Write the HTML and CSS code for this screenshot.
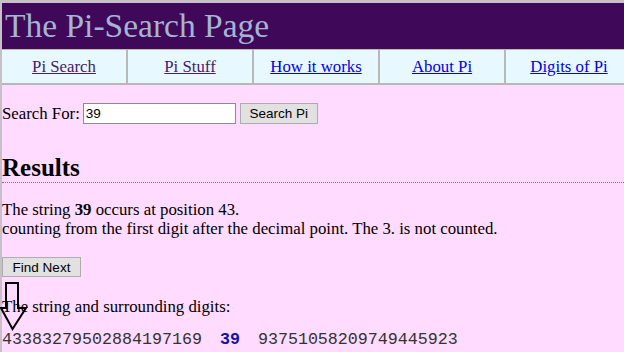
FILE: index.html
```html
<!DOCTYPE html>
<html lang="en">
<head>
  <meta charset="UTF-8" />
  <title>The Pi-Search Page</title>
  <link rel="stylesheet" href="styles.css">
</head>
<body>
  <div class="page">
    <h1 class="title">The Pi-Search Page</h1>
    <nav class="menu">
      <a href="#" class="visited">Pi Search</a>
      <a href="#" class="visited">Pi Stuff</a>
      <a href="#">How it works</a>
      <a href="#">About Pi</a>
      <a href="#">Digits of Pi</a>
    </nav>

    <form class="search" onsubmit="return false">
      <label for="q">Search For:</label>
      <input type="text" id="q" value="39" />
      <button type="submit">Search Pi</button>
    </form>

    <h2 class="results">Results</h2>
    <p class="found">The string <b>39</b> occurs at position 43.<br>
    counting from the first digit after the decimal point. The 3. is not counted.</p>

    <button class="next">Find Next</button>

    <div class="context">
      <svg class="arrow" width="28" height="50" viewBox="0 0 28 50">
        <path d="M6 1 H18 V26 H26 L12.5 47 L1 26 H6 Z" fill="none" stroke="#000" stroke-width="2"/>
      </svg>
      <p>The string and surrounding digits:</p>
      <div class="digits">43383279502884197169 <b>39</b> 93751058209749445923</div>
    </div>
  </div>
</body>
</html>
```

FILE: styles.css
```css
body {
  margin: 0;
  background: #ffdcff;
  font-family: "Liberation Serif", "Times New Roman", serif;
  font-size: 16.8px;
  color: #000;
  overflow: hidden;
}
.page {
  border-top: 3px solid #c8c0c8;
  border-left: 2px solid #c8c0c8;
  min-height: 349px;
}
.title {
  margin: 0;
  background: #400858;
  color: #a4b4d4;
  font-weight: normal;
  font-size: 33.5px;
  line-height: 46px;
  padding-left: 3px;
}
.menu {
  display: grid;
  grid-template-columns: repeat(5, 126px);
  background: #e8f8ff;
  border-top: 1px solid #b8b8b8;
  border-bottom: 2px solid #b8b8b8;
}
.menu a {
  text-align: center;
  line-height: 33px;
  color: #0000ee;
  border-right: 2px solid #b8b8b8;
}
.menu a:last-child {
  border-right: none;
}
.menu a.visited {
  color: #46206a;
}
.search {
  margin: 18px 0 0 0;
  display: flex;
  align-items: center;
}
.search label {
  margin-right: 3px;
}
.search input {
  width: 147px;
  height: 17px;
  padding: 1px 2px;
  border: 1px solid #8c8c8c;
  font-family: "Liberation Sans", Arial, sans-serif;
  font-size: 13.5px;
}
.search button, .next {
  font-family: "Liberation Sans", Arial, sans-serif;
  font-size: 13.5px;
  background: #e1e1e1;
  border: 1px solid #adadad;
  height: 21px;
  padding: 0;
  white-space: nowrap;
  color: #000;
}
.search button {
  margin-left: 4px;
  width: 78px;
}
.results {
  margin: 30px 0 0 0;
  font-size: 25px;
  line-height: 28px;
  border-bottom: 1px dotted #f03c64;
}
.found {
  margin: 17px 0 0 0;
  line-height: 19px;
}
.next {
  margin: 19px 0 0 0;
  display: block;
  width: 79px;
  height: 20px;
}
.context {
  position: relative;
}
.context p {
  margin: 20px 0 0 0;
}
.arrow {
  position: absolute;
  left: -2px;
  top: -15px;
}
.digits {
  margin: 13px 0 0 0;
  font-family: "Liberation Mono", "Courier New", monospace;
  font-size: 16.67px;
  white-space: pre;
  color: #333;
}
.digits b {
  color: #1414a0;
  padding: 0 8px;
}
```
